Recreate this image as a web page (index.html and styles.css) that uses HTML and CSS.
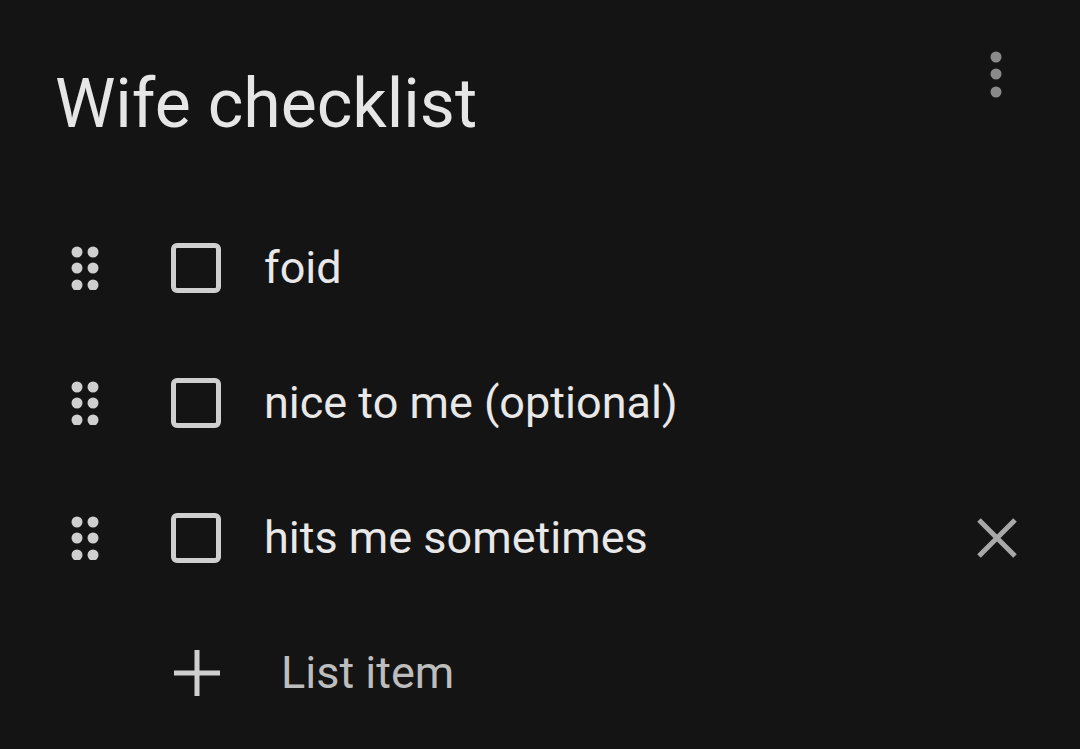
FILE: index.html
```html
<!DOCTYPE html>
<html>
<head>
<meta charset="utf-8">
<link rel="stylesheet" href="styles.css">
</head>
<body>
<main class="note">
  <header class="note-header">
    <h1 class="title">Wife checklist</h1>
    <svg class="menu" width="30" height="60" viewBox="0 0 30 60">
      <circle cx="15" cy="12" r="5.5" fill="#8a8a8a"/>
      <circle cx="15" cy="29" r="5.5" fill="#8a8a8a"/>
      <circle cx="15" cy="47" r="5.5" fill="#8a8a8a"/>
    </svg>
  </header>
  <ul class="items">
    <li class="item">
      <svg class="handle" width="32" height="44" viewBox="0 0 32 44">
        <circle cx="8" cy="6" r="5.5" fill="#cfcfcf"/><circle cx="24" cy="6" r="5.5" fill="#cfcfcf"/>
        <circle cx="8" cy="22" r="5.5" fill="#cfcfcf"/><circle cx="24" cy="22" r="5.5" fill="#cfcfcf"/>
        <circle cx="8" cy="39" r="5.5" fill="#cfcfcf"/><circle cx="24" cy="39" r="5.5" fill="#cfcfcf"/>
      </svg>
      <span class="box"></span>
      <span class="text">foid</span>
    </li>
    <li class="item">
      <svg class="handle" width="32" height="44" viewBox="0 0 32 44">
        <circle cx="8" cy="6" r="5.5" fill="#cfcfcf"/><circle cx="24" cy="6" r="5.5" fill="#cfcfcf"/>
        <circle cx="8" cy="22" r="5.5" fill="#cfcfcf"/><circle cx="24" cy="22" r="5.5" fill="#cfcfcf"/>
        <circle cx="8" cy="39" r="5.5" fill="#cfcfcf"/><circle cx="24" cy="39" r="5.5" fill="#cfcfcf"/>
      </svg>
      <span class="box"></span>
      <span class="text">nice to me (optional)</span>
    </li>
    <li class="item">
      <svg class="handle" width="32" height="44" viewBox="0 0 32 44">
        <circle cx="8" cy="6" r="5.5" fill="#cfcfcf"/><circle cx="24" cy="6" r="5.5" fill="#cfcfcf"/>
        <circle cx="8" cy="22" r="5.5" fill="#cfcfcf"/><circle cx="24" cy="22" r="5.5" fill="#cfcfcf"/>
        <circle cx="8" cy="39" r="5.5" fill="#cfcfcf"/><circle cx="24" cy="39" r="5.5" fill="#cfcfcf"/>
      </svg>
      <span class="box"></span>
      <span class="text">hits me sometimes</span>
      <svg class="remove" width="42" height="42" viewBox="0 0 42 42">
        <path d="M3 3 L39 39 M39 3 L3 39" stroke="#a8a8a8" stroke-width="5" fill="none"/>
      </svg>
    </li>
    <li class="item add">
      <svg class="plus" width="48" height="48" viewBox="0 0 48 48">
        <path d="M24 1 V47 M1 24 H47" stroke="#cfcfcf" stroke-width="5" fill="none"/>
      </svg>
      <span class="add-text">List item</span>
    </li>
  </ul>
</main>
</body>
</html>
```
FILE: styles.css
```css
html, body {
  margin: 0;
  padding: 0;
  background: #141414;
}
body {
  width: 1080px;
  height: 749px;
  overflow: hidden;
  font-family: Roboto, "Noto Sans", sans-serif;
}
.note-header {
  display: flex;
  align-items: flex-start;
  justify-content: space-between;
  height: 200px;
  box-sizing: border-box;
  padding: 45px 69px 0 55px;
}
.title {
  margin: 19px 0 0 0;
  font-size: 68px;
  line-height: 80px;
  font-weight: 400;
  color: #e6e6e6;
}
.menu {
  display: block;
}
.items {
  list-style: none;
  margin: 0;
  padding: 0;
}
.item {
  display: flex;
  align-items: center;
  height: 135px;
  padding-left: 69px;
  padding-right: 62px;
}
.handle {
  display: block;
  flex: none;
}
.box {
  flex: none;
  width: 50px;
  height: 50px;
  box-sizing: border-box;
  border: 5px solid #cfcfcf;
  border-radius: 6px;
  margin-left: 70px;
}
.text {
  flex: 1;
  margin-left: 43px;
  font-size: 45px;
  color: #e8e8e8;
  line-height: 1;
}
.remove {
  flex: none;
  display: block;
}
.add {
  padding-left: 173px;
}
.plus {
  display: block;
  flex: none;
}
.add-text {
  margin-left: 60px;
  font-size: 45px;
  color: #bdbdbd;
  line-height: 1;
}
```
